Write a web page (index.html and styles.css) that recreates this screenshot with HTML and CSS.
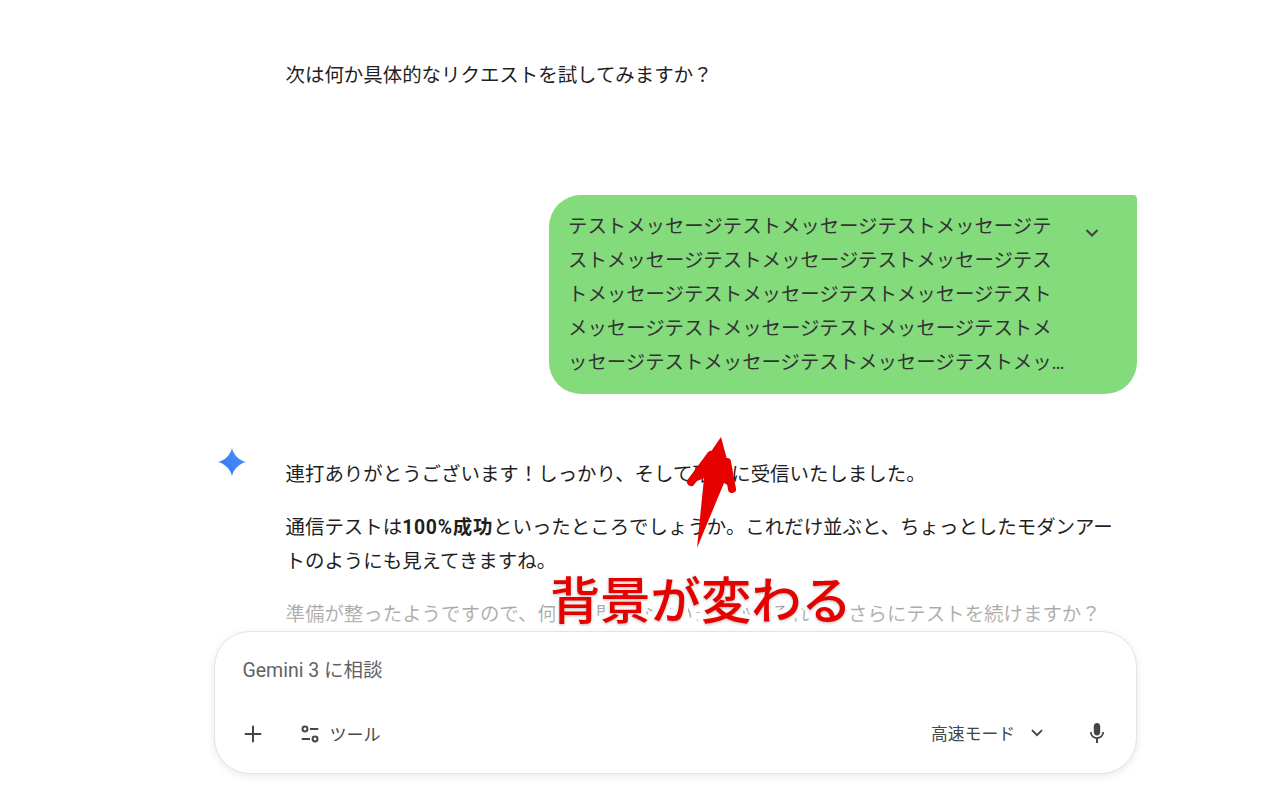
FILE: index.html
```html
<!DOCTYPE html>
<html lang="ja">
<head>
    <meta charset="UTF-8">
    <meta name="viewport" content="width=device-width, initial-scale=1.0">
    <title>Gemini</title>
    <link rel="stylesheet" href="styles.css">
</head>
<body>
    <div class="page">
        <main class="chat">
            <p class="model-text first-text">次は何か具体的なリクエストを試してみますか？</p>

            <div class="user-row">
                <div class="user-bubble">
                    <p class="user-text">テストメッセージテストメッセージテストメッセージテストメッセージテストメッセージテストメッセージテストメッセージテストメッセージテストメッセージテストメッセージテストメッセージテストメッセージテストメッセージテストメッセージテストメッセージテストメッセージテストメッセージ</p>
                    <svg class="bubble-chevron" viewBox="0 0 24 24"><polyline points="6.5 9 12 14.5 17.5 9"/></svg>
                </div>
            </div>

            <div class="response">
                <div class="response-icon">
                    <svg class="spark" viewBox="0 0 28 28">
                        <defs>
                            <linearGradient id="sparkFill" x1="0" y1="1" x2="1" y2="0">
                                <stop offset="0" stop-color="#2f7bf6"/>
                                <stop offset="1" stop-color="#4a90f5"/>
                            </linearGradient>
                        </defs>
                        <path fill="url(#sparkFill)" d="M14 0C15.500 6.500 21 12.500 28 14C21 15.500 15.500 21.500 14 28C12.500 21.500 7 15.500 0 14C7 12.500 12.500 6.500 14 0Z"/>
                    </svg>
                </div>
                <div class="response-body">
                    <p class="model-text">連打ありがとうございます！しっかり、そして確実に受信いたしました。</p>
                    <p class="model-text">通信テストは<b>100%成功</b>といったところでしょうか。これだけ並ぶと、ちょっとしたモダンアートのようにも見えてきますね。</p>
                    <p class="model-text">準備が整ったようですので、何か質問をなさいますか、それともさらにテストを続けますか？</p>
                </div>
            </div>
        </main>

        <section class="composer-wrap">
            <div class="composer">
                <div class="composer-input">Gemini 3 に相談</div>
                <div class="composer-tools">
                    <svg class="icon-plus" viewBox="0 0 24 24"><path d="M12 3v18M3 12h18"/></svg>
                    <div class="tools-btn">
                        <svg class="icon-tune" viewBox="0 0 24 24">
                            <circle cx="6.500" cy="6.500" r="2.700"/>
                            <path d="M12 6.500h9M3 17.500h9"/>
                            <circle cx="17.500" cy="17.500" r="2.700"/>
                        </svg>
                        <span>ツール</span>
                    </div>
                    <div class="mode-btn">
                        <span class="mode-label">高速モード</span>
                        <svg class="icon-chevron" viewBox="0 0 24 24"><polyline points="6 8.500 12 14.500 18 8.500"/></svg>
                    </div>
                    <svg class="icon-mic" viewBox="0 0 24 24">
                        <path d="M12 14.500c1.900 0 3.200-1.400 3.200-3.200V5.200C15.200 3.400 13.900 2 12 2S8.800 3.400 8.800 5.200v6.100c0 1.800 1.300 3.200 3.200 3.200z"/>
                        <path d="M17.300 11c0 3-2.400 5.200-5.300 5.200S6.700 14 6.700 11H5c0 3.500 2.600 6.400 6 6.900V22h2v-4.100c3.400-.5 6-3.400 6-6.900h-1.700z"/>
                    </svg>
                </div>
            </div>
        </section>

        <!-- annotation drawn over the screenshot -->
        <svg class="note-arrow" viewBox="0 0 1280 795">
            <path class="arrow-head" d="M721 437L735 489L724 483L697 548L704 478L688 485Z"/>
            <path class="arrow-barb" d="M711 455L691 482M727 462L732 489"/>
        </svg>
        <div class="note-text">背景が変わる</div>
    </div>
</body>
</html>
```
FILE: styles.css
```css
* {
    box-sizing: border-box;
}
body {
    margin: 0;
    background-color: #fff;
    color: #1f1f1f;
    font-family: Roboto, "Noto Sans CJK JP", sans-serif;
}
p {
    margin: 0;
}
.page {
    position: relative;
    display: flex;
    flex-direction: column;
    height: 795px;
    padding-left: 214px;
    overflow: hidden;
}
.chat {
    flex: 1;
    width: 923px;
    min-height: 0;
    overflow: hidden;
    padding-top: 59px;
}
.model-text {
    font-size: 19.45px;
    line-height: 34px;
}
.model-text b {
    font-weight: 700;
    letter-spacing: 0.7px;
}
.first-text {
    margin-left: 71.5px;
}
.user-row {
    display: flex;
    justify-content: flex-end;
    margin-top: 102px;
}
.user-bubble {
    display: flex;
    width: 588.5px;
    height: 199px;
    padding: 15px 20px 14px 19.5px;
    background-color: #84db7c;
    border-radius: 32px 4px 32px 32px;
}
.user-text {
    display: -webkit-box;
    -webkit-box-orient: vertical;
    -webkit-line-clamp: 5;
    overflow: hidden;
    width: 500px;
    height: 170px;
    color: #333;
    font-size: 19.4px;
    line-height: 34px;
}
.bubble-chevron {
    width: 24px;
    height: 24px;
    margin: 11px 0 0 12px;
    fill: none;
    stroke: #444;
    stroke-width: 2.2;
}
.response {
    display: flex;
    margin-top: 54px;
}
.response-icon {
    flex: 0 0 71.5px;
    padding-left: 4px;
}
.spark {
    display: block;
    width: 28px;
    height: 28px;
}
.response-body {
    display: flex;
    flex-direction: column;
    gap: 19px;
    width: 830px;
    padding-top: 10px;
}
.composer-wrap {
    position: relative;
    width: 923px;
    margin-bottom: 21px;
}
/* fade over the text scrolling under the input */
.composer-wrap::before {
    content: "";
    position: absolute;
    left: 0;
    right: 0;
    top: -42px;
    height: 42px;
    background: linear-gradient(rgba(255, 255, 255, 0.55), rgba(255, 255, 255, 0.7));
}
.composer {
    position: relative;
    display: flex;
    flex-direction: column;
    height: 143px;
    margin-left: -0.5px;
    padding: 25px 27px 0 28px;
    background-color: #fff;
    border: 1px solid #e4e4e4;
    border-radius: 36px;
    box-shadow: 0 2px 8px rgba(0, 0, 0, 0.09);
}
.composer-input {
    height: 28px;
    color: #5f6368;
    font-size: 19.5px;
    line-height: 28px;
}
.composer-tools {
    display: flex;
    align-items: center;
    margin-top: 36px;
    color: #444746;
}
.icon-plus {
    width: 22px;
    height: 22px;
    margin-left: -1px;
    fill: none;
    stroke: #444746;
    stroke-width: 2.2;
}
.tools-btn {
    display: flex;
    align-items: center;
    gap: 9px;
    margin-left: 35px;
    font-size: 17px;
}
.icon-tune {
    width: 22px;
    height: 22px;
    fill: none;
    stroke: #444746;
    stroke-width: 2.2;
}
.mode-btn {
    display: flex;
    align-items: center;
    gap: 12px;
    margin-left: auto;
    font-size: 16.8px;
}
.mode-label {
    margin-top: -2px;
}
.icon-chevron {
    width: 20px;
    height: 20px;
    margin-top: -2px;
    margin-right: 1px;
    fill: none;
    stroke: #444746;
    stroke-width: 2.4;
}
.icon-mic {
    width: 24px;
    height: 24px;
    margin-top: -2px;
    margin-left: 37px;
    fill: #444746;
}
.note-arrow {
    position: absolute;
    left: 0;
    top: 0;
    width: 1280px;
    height: 795px;
    pointer-events: none;
}
.arrow-head {
    fill: #e60000;
}
.arrow-barb {
    fill: none;
    stroke: #e60000;
    stroke-width: 8;
    stroke-linecap: round;
}
.note-text {
    position: absolute;
    left: 550px;
    top: 561px;
    color: #e60000;
    font-family: "Noto Sans CJK JP", sans-serif;
    font-size: 50.3px;
    font-weight: 500;
    line-height: 72px;
    -webkit-text-stroke: 9px #fff;
    paint-order: stroke fill;
    text-shadow: 0 1px 3px rgba(0, 0, 0, 0.3);
}
```
